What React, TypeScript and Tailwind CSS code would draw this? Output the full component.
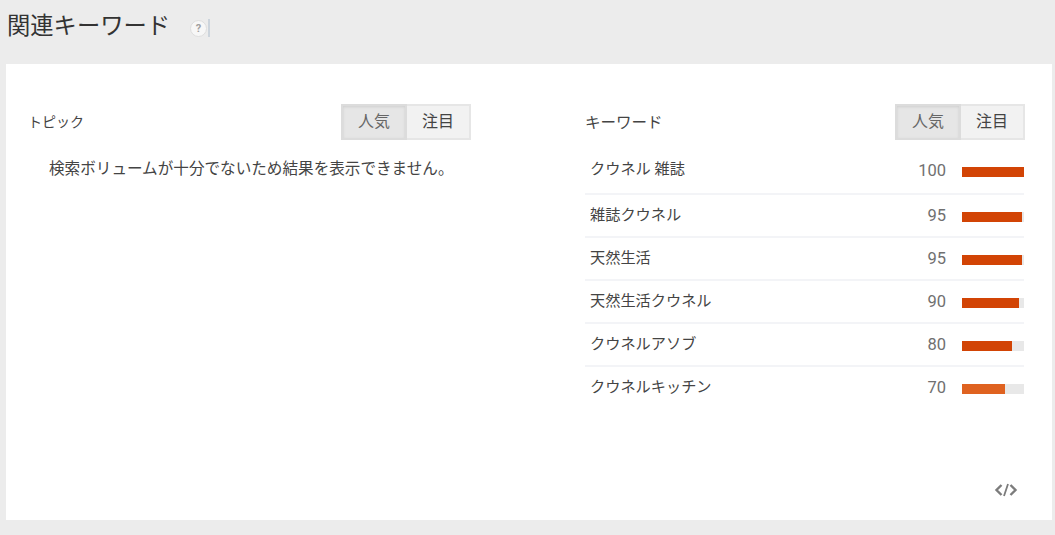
const font = { jp: 'font-["Roboto","Noto_Sans_CJK_JP",sans-serif]' };

const rows = [
  { name: 'クウネル 雑誌', value: 100, color: 'bg-[#d24405]' },
  { name: '雑誌クウネル', value: 95, color: 'bg-[#d24405]' },
  { name: '天然生活', value: 95, color: 'bg-[#d24405]' },
  { name: '天然生活クウネル', value: 90, color: 'bg-[#d24405]' },
  { name: 'クウネルアソブ', value: 80, color: 'bg-[#d24405]' },
  { name: 'クウネルキッチン', value: 70, color: 'bg-[#df6220]' },
];

function Toggle() {
  return (
    <div className="flex text-[16px] leading-none">
      <div className="w-[66px] h-[36px] flex items-center justify-center bg-[#e6e6e6] border-2 border-[#dcdcdc] text-[#666] shadow-[inset_0_1px_3px_rgba(0,0,0,0.1)]">
        人気
      </div>
      <div className="w-[64px] h-[36px] flex items-center justify-center bg-[#f2f2f2] border-2 border-l-0 border-[#e6e6e6] text-[#444]">
        注目
      </div>
    </div>
  );
}

export default function App() {
  return (
    <div className={`${font.jp} h-[535px] w-[1055px] overflow-hidden bg-[#ececec] flex flex-col`}>
      <div className="h-[64px] pl-[7px] pt-[10px] flex items-start">
        <h1 className="text-[23.3px] leading-[32px] font-normal text-[#333]">関連キーワード</h1>
        <div className="ml-[20px] mt-[10px] w-[17px] h-[17px] rounded-full bg-[#f7f7f7] border border-[#dedede] flex items-center justify-center text-[11px] font-bold text-[#a0a0a0] leading-none">
          ?
        </div>
        <div className="ml-[1px] mt-[9px] w-[2px] h-[18px] bg-[#ccd4dc]" />
      </div>

      <div className="ml-[6px] mr-[3px] h-[456px] bg-white pt-[40px] pl-[23px] pr-[27px] flex justify-between relative">
        <section className="w-[442px]">
          <div className="flex items-center justify-between h-[36px]">
            <h2 className="-ml-[1px] text-[14px] font-normal text-[#444]">トピック</h2>
            <Toggle />
          </div>
          <p className="mt-[18px] pl-[20px] text-[15.6px] leading-[22px] text-[#444]">
            検索ボリュームが十分でないため結果を表示できません。
          </p>
        </section>

        <section className="w-[440px]">
          <div className="flex items-center justify-between h-[36px]">
            <h2 className="pt-[3px] text-[15.5px] font-normal text-[#444]">キーワード</h2>
            <Toggle />
          </div>
          <div className="mt-[10px] mr-[1px]">
            {rows.map((row, i) => (
              <div
                key={row.name}
                className={`${i === 0 ? 'h-[45px]' : 'h-[43px] pt-[2px] last:pt-0'} flex items-center border-b-2 border-[#f3f4f7] last:border-b-0`}
              >
                <span className={`pl-[5px] text-[15.2px] text-[#444] flex-1 ${i === 0 ? '-mt-[4px]' : '-mt-[2px]'}`}>{row.name}</span>
                <span className="text-[16.5px] text-[#707070] w-[40px] text-right">{row.value}</span>
                <div className="ml-[16px] w-[62px] h-[10px] bg-[#e8e8e8]">
                  <div className={`h-full ${row.color}`} style={{ width: `${row.value === 95 ? 97 : row.value === 90 ? 92 : row.value}%` }} />
                </div>
              </div>
            ))}
          </div>
        </section>

        <svg className="absolute right-[34px] bottom-[23px]" width="24" height="14" viewBox="0 0 24 14" fill="none" stroke="#7c7c7c" strokeWidth="2.4">
          <path d="M7.5 2 L2.5 7 L7.5 12" />
          <path d="M16.5 2 L21.5 7 L16.5 12" />
          <path d="M14 1 L10 13" strokeWidth="1.8" />
        </svg>
      </div>
    </div>
  );
}
